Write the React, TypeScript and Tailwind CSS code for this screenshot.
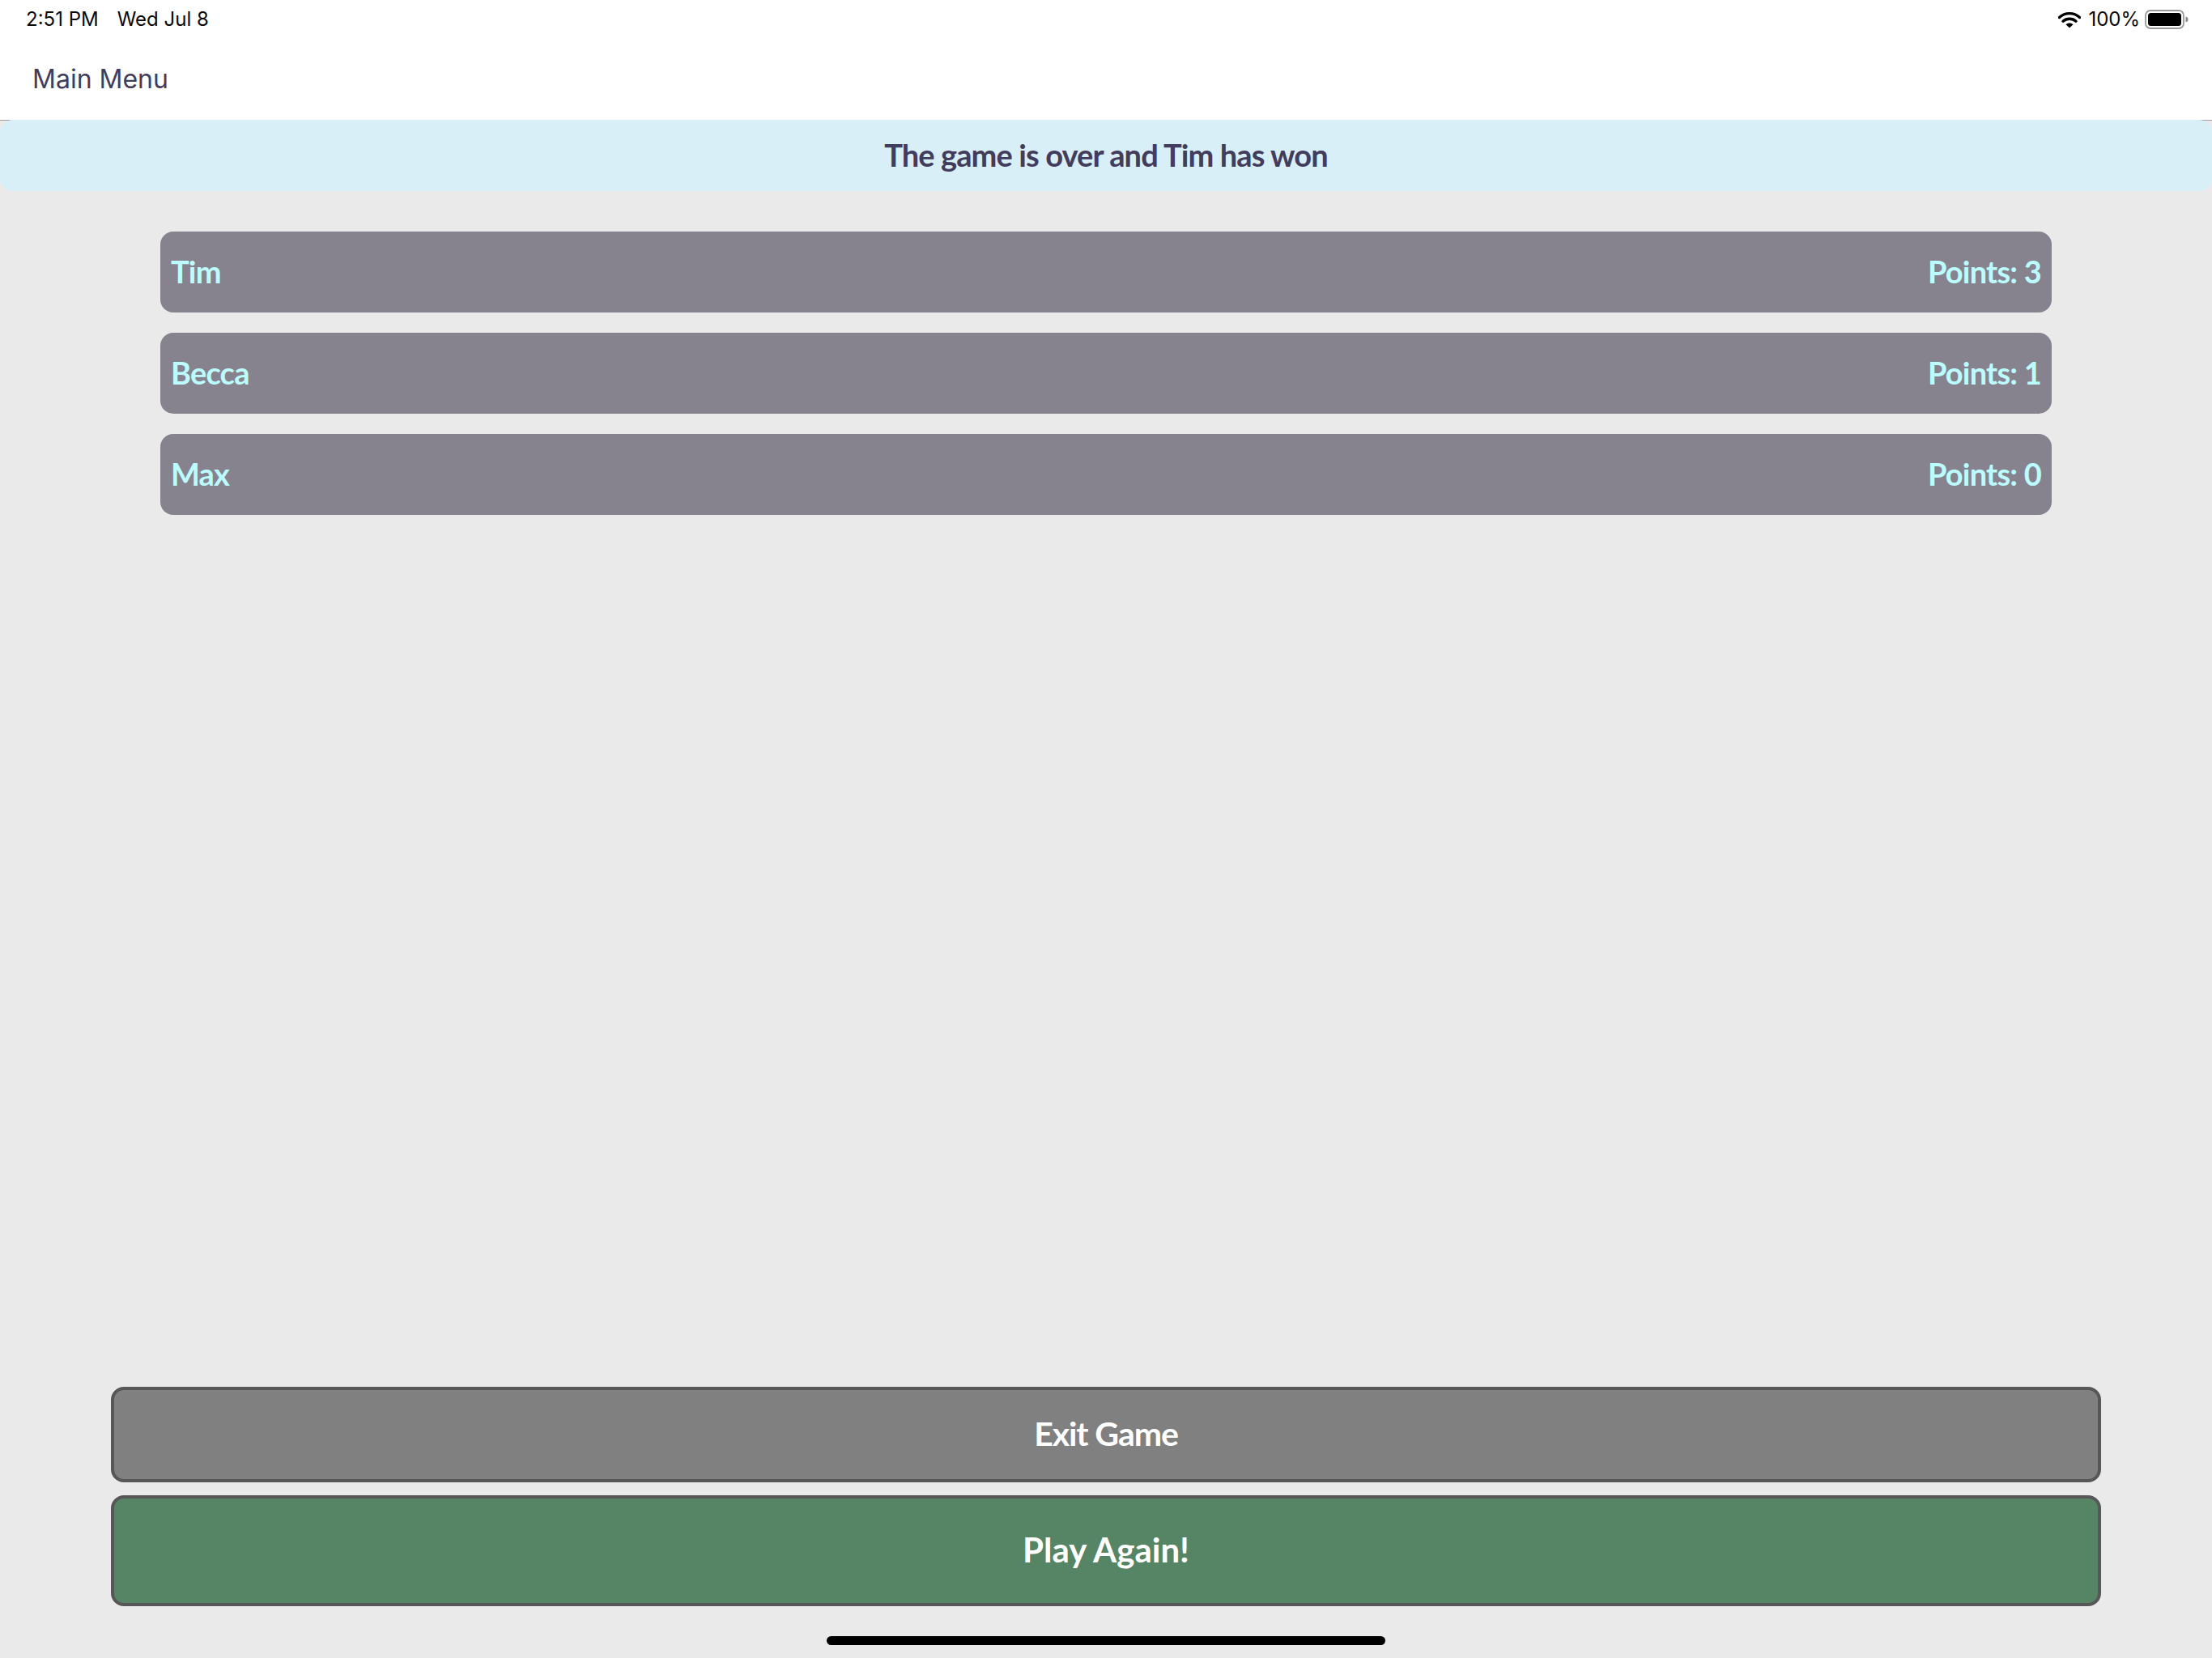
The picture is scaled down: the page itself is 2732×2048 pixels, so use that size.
const players = [
  { name: 'Tim', points: 3 },
  { name: 'Becca', points: 1 },
  { name: 'Max', points: 0 },
]

const handFont = { fontFamily: 'Lato, "Liberation Sans", sans-serif' }

function WifiIcon() {
  return (
    <svg width="28" height="21" viewBox="0 0 28 21" fill="none">
      <path d="M1.5 7.5C8.5 1 19.5 1 26.5 7.5" stroke="#000" strokeWidth="3.4" strokeLinecap="round" />
      <path d="M6 12.2C10.5 8.2 17.5 8.2 22 12.2" stroke="#000" strokeWidth="3.4" strokeLinecap="round" />
      <path d="M14 20.5L9.5 16.2C12 14 16 14 18.5 16.2L14 20.5Z" fill="#000" />
    </svg>
  )
}

function BatteryIcon() {
  return (
    <svg width="54" height="24" viewBox="0 0 54 24" fill="none">
      <rect x="1" y="1" width="47" height="22" rx="6" stroke="#9a9a9a" strokeWidth="1.8" />
      <rect x="4" y="4" width="41" height="16" rx="3.5" fill="#000" />
      <path d="M50.5 8.5C52.5 9 53.6 10.3 53.6 12C53.6 13.7 52.5 15 50.5 15.5V8.5Z" fill="#8a8a8a" />
    </svg>
  )
}

export default function App() {
  return (
    <div className="relative flex h-[2048px] w-[2732px] flex-col overflow-hidden bg-[#eaeaea]">
      <header
        className="flex h-[149px] shrink-0 flex-col border-b border-[#a0a0a0] bg-white"
        style={{ fontFamily: 'Inter, sans-serif' }}
      >
        <div className="flex h-[48px] items-center justify-between pl-[32px] pr-[29px] text-[24px] text-[#0a0a0a]">
          <div className="flex gap-[23px]">
            <span>2:51 PM</span>
            <span>Wed Jul 8</span>
          </div>
          <div className="flex items-center">
            <WifiIcon />
            <span className="ml-[9px] mr-[6px]">100%</span>
            <BatteryIcon />
          </div>
        </div>
        <div className="flex items-start pl-[40px] pt-[26px] text-[32px] leading-[48px] text-[#423d5c]">
          Main Menu
        </div>
      </header>

      <div className="relative -mt-px flex h-[88px] shrink-0 items-center justify-center rounded-[16px] bg-[#d9eff8] pb-[2px]">
        <span className="text-[38px] font-bold tracking-[-0.9px] text-[#423d5c]" style={handFont}>
          The game is over and Tim has won
        </span>
      </div>

      <main className="flex flex-col gap-[25px] px-[198px] pt-[50px]">
        {players.map((player) => (
          <div
            key={player.name}
            className="flex h-[100px] items-center justify-between rounded-[16px] bg-[#86838f] px-[13px] pb-[2px] text-[38px] font-bold tracking-[-0.8px] text-[#bcfcff]"
            style={handFont}
          >
            <span>{player.name}</span>
            <span>Points: {player.points}</span>
          </div>
        ))}
      </main>

      <div className="mt-auto flex flex-col gap-[16px] px-[137px] pb-[64px] font-bold text-white" style={handFont}>
        <button className="flex h-[118px] items-center justify-center rounded-[16px] border-4 border-[#575757] bg-[#808080] pb-[2px] text-[41px] tracking-[-1.1px]">
          Exit Game
        </button>
        <button className="flex h-[137px] items-center justify-center rounded-[16px] border-4 border-[#575757] bg-[#568565] pb-[2px] text-[42px]">
          Play Again!
        </button>
      </div>

      <div className="absolute bottom-[16px] left-[1021px] h-[11px] w-[690px] rounded-full bg-black" />
    </div>
  )
}
